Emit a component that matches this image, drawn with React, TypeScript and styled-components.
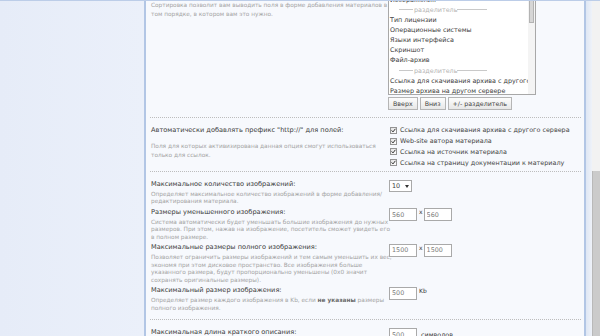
import styled, { createGlobalStyle } from "styled-components";

const GlobalStyle = createGlobalStyle`
    html, body {
        margin: 0;
        padding: 0;
    }
    body {
        font-family: "DejaVu Sans", Verdana, sans-serif;
        background: #e8edf8;
    }
`;

const sortOptions = [
    "Изображения",
    "---",
    "Тип лицензии",
    "Операционные системы",
    "Языки интерфейса",
    "Скриншот",
    "Файл-архив",
    "---",
    "Ссылка для скачивания архива с другого сервера",
    "Размер архива на другом сервере",
];

const prefixFields = [
    "Ссылка для скачивания архива с другого сервера",
    "Web-site автора материала",
    "Ссылка на источник материала",
    "Ссылка на страницу документации к материалу",
];

const Check = () => (
    <svg width="5" height="5" viewBox="0 0 5 5">
        <path d="M0.6 2.4 L2 3.9 L4.4 0.8" fill="none" stroke="#333" strokeWidth="1" />
    </svg>
);

const App = () => {
    return (
        <>
            <GlobalStyle />
            <Page>
                <Sidebar />
                <Main>
                    <Content>
                        <Row>
                            <Field>
                                <Label>
                                    <Title>Порядок полей в форме:</Title>
                                    <Desc $loose>
                                        Сортировка позволит вам выводить поля в форме добавления материалов в<br />
                                        том порядке, в котором вам это нужно.
                                    </Desc>
                                </Label>
                                <Control>
                                    <SortBox>
                                        <ListBox>
                                            <Options>
                                                {sortOptions.map((o, i) =>
                                                    o === "---" ? (
                                                        <DividerOption key={i}>разделитель</DividerOption>
                                                    ) : (
                                                        <Option key={i}>{o}</Option>
                                                    )
                                                )}
                                            </Options>
                                            <ListTrack>
                                                <ListThumb />
                                            </ListTrack>
                                        </ListBox>
                                        <ButtonBar>
                                            <Button>Вверх</Button>
                                            <Button>Вниз</Button>
                                            <Button>+/- разделитель</Button>
                                        </ButtonBar>
                                    </SortBox>
                                </Control>
                            </Field>
                        </Row>

                        <Row $tight>
                            <Field>
                                <Label>
                                    <Title>Автоматически добавлять префикс "http://" для полей:</Title>
                                    <Desc $loose>
                                        Поля для которых активизирована данная опция смогут использоваться<br />
                                        только для ссылок.
                                    </Desc>
                                </Label>
                                <Control>
                                    <CheckList>
                                        {prefixFields.map((f) => (
                                            <CheckItem key={f}>
                                                <Box>
                                                    <Check />
                                                </Box>
                                                {f}
                                            </CheckItem>
                                        ))}
                                    </CheckList>
                                </Control>
                            </Field>
                        </Row>

                        <Row>
                            <Field>
                                <Label>
                                    <Title>Максимальное количество изображений:</Title>
                                    <Desc>
                                        Определяет максимальное количество изображений в форме добавления/<br />
                                        редактирования материала.
                                    </Desc>
                                </Label>
                                <Control>
                                    <Select>10</Select>
                                </Control>
                            </Field>
                            <Field>
                                <Label>
                                    <Title>Размеры уменьшенного изображения:</Title>
                                    <Desc>
                                        Система автоматически будет уменьшать большие изображения до нужных<br />
                                        размеров. При этом, нажав на изображение, посетитель сможет увидеть его<br />
                                        в полном размере.
                                    </Desc>
                                </Label>
                                <Control>
                                    <Inline>
                                        <TextInput readOnly defaultValue="560" />
                                        <Unit>x</Unit>
                                        <TextInput readOnly defaultValue="560" />
                                    </Inline>
                                </Control>
                            </Field>
                            <Field>
                                <Label>
                                    <Title>Максимальные размеры полного изображения:</Title>
                                    <Desc>
                                        Позволяет ограничить размеры изображений и тем самым уменьшить их вес,<br />
                                        экономя при этом дисковое пространство. Все изображения больше<br />
                                        указанного размера, будут пропорционально уменьшены (0x0 значит<br />
                                        сохранять оригинальные размеры).
                                    </Desc>
                                </Label>
                                <Control>
                                    <Inline>
                                        <TextInput readOnly defaultValue="1500" />
                                        <Unit>x</Unit>
                                        <TextInput readOnly defaultValue="1500" />
                                    </Inline>
                                </Control>
                            </Field>
                            <Field>
                                <Label>
                                    <Title>Максимальный размер изображения:</Title>
                                    <Desc>
                                        Определяет размер каждого изображения в Kb, если <b>не указаны</b> размеры<br />
                                        полного изображения.
                                    </Desc>
                                </Label>
                                <Control>
                                    <Inline>
                                        <TextInput readOnly defaultValue="500" />
                                        <Unit>Kb</Unit>
                                    </Inline>
                                </Control>
                            </Field>
                        </Row>

                        <Row>
                            <Field>
                                <Label>
                                    <Title>Максимальная длина краткого описания:</Title>
                                </Label>
                                <Control>
                                    <Inline $center>
                                        <TextInput readOnly defaultValue="500" />
                                        <Suffix>символов</Suffix>
                                    </Inline>
                                </Control>
                            </Field>
                        </Row>
                    </Content>
                </Main>
                <Gutter>
                    <Strip />
                    <Track>
                        <Thumb />
                    </Track>
                </Gutter>
            </Page>
        </>
    );
};

const Page = styled.div`
    display: flex;
    width: 600px;
    height: 336px;
    border-top: 1px solid #bccde8;
    box-sizing: border-box;
    overflow: hidden;
`;
const Sidebar = styled.aside`
    width: 144px;
    flex-shrink: 0;
    background: linear-gradient(90deg, #e6ecf8, #ebf0fa);
`;
const Main = styled.main`
    width: 438px;
    flex-shrink: 0;
    border-left: 2px solid #b2c6e5;
    border-right: 2px solid #b2c6e5;
    background: #f7f9fd;
    overflow: hidden;
`;
const Content = styled.div`
    margin-top: -24px;
    padding: 0 3px 0 4px;
`;
const Row = styled.section<{ $tight?: boolean }>`
    display: flex;
    flex-direction: column;
    gap: 1px;
    padding: 6.5px 0 ${(p) => (p.$tight ? "3px" : "7px")};
    border-bottom: 1px dotted #bdbdbd;
`;
const Field = styled.div`
    display: grid;
    grid-template-columns: 239px 1fr;
    align-items: start;
`;
const Label = styled.div`
    padding: 0 2px 0 1px;
`;
const Title = styled.div`
    font-size: 6.6px;
    line-height: 10px;
    color: #3a3a3a;
    white-space: nowrap;
`;
const Desc = styled.p<{ $loose?: boolean }>`
    margin: ${(p) => (p.$loose ? "7.25px" : "2px")} 0 0;
    font-size: 5.8px;
    line-height: ${(p) => (p.$loose ? "9.5px" : "7.5px")};
    color: #a3a3a3;
    white-space: nowrap;

    b {
        color: #6a6a6a;
        font-weight: bold;
    }
`;
const Control = styled.div`
    padding-top: 1.5px;
    font-size: 6.4px;
    color: #3a3a3a;
`;
const SortBox = styled.div`
    margin: 8.5px 0 0 -1px;
`;
const ListBox = styled.div`
    display: flex;
    width: 148px;
    height: 101.5px;
    box-sizing: border-box;
    border: 1px solid #a8a8a8;
    background: #fff;
    overflow: hidden;
`;
const Options = styled.ul`
    flex: 1;
    min-width: 0;
    margin: 0;
    padding: 0 0 0 1px;
    list-style: none;
    overflow: hidden;
`;
const Option = styled.li`
    line-height: 10.15px;
    white-space: nowrap;
    color: #3c3c3c;
`;
const DividerOption = styled.li`
    display: flex;
    align-items: center;
    line-height: 10.15px;
    padding-left: 9px;
    color: #b4b4b4;

    &::before,
    &::after {
        content: "";
        height: 1px;
        background: #c9c9c9;
    }
    &::before {
        width: 14px;
        margin-right: 1px;
    }
    &::after {
        width: 30px;
    }
`;
const ListTrack = styled.div`
    width: 7px;
    flex-shrink: 0;
    background: #f4f4f4;
    padding: 0 1px;
    box-sizing: border-box;
`;
const ListThumb = styled.div`
    height: 28px;
    background: #d6d6d6;
    border: 1px solid #b3b3b3;
    border-top: none;
    box-sizing: border-box;
`;
const ButtonBar = styled.div`
    display: flex;
    gap: 2px;
    margin-top: 2px;
`;
const Button = styled.button`
    height: 13px;
    padding: 0 4px;
    border: 1px solid #b5b5b5;
    border-radius: 0;
    background: linear-gradient(#fdfdfd, #e7e7e7);
    font-family: "DejaVu Sans", Verdana, sans-serif;
    font-size: 6.3px;
    line-height: 11px;
    color: #444;
`;
const CheckList = styled.ul`
    margin: -1px 0 0;
    padding: 0 0 0 1px;
    list-style: none;
`;
const CheckItem = styled.li`
    display: flex;
    align-items: center;
    gap: 3px;
    height: 10.8px;
    white-space: nowrap;
    color: #444;
`;
const Box = styled.span`
    display: inline-flex;
    align-items: center;
    justify-content: center;
    width: 7px;
    height: 7px;
    box-sizing: border-box;
    border: 1px solid #949494;
    background: linear-gradient(135deg, #e2e2e2, #fdfdfd);
`;
const Select = styled.div`
    display: inline-flex;
    align-items: center;
    gap: 5px;
    width: 23px;
    height: 12px;
    box-sizing: border-box;
    padding-left: 2px;
    border: 1px solid #a9a9a9;
    background: #fff;

    &::after {
        content: "";
        border-left: 2px solid transparent;
        border-right: 2px solid transparent;
        border-top: 3px solid #333;
    }
`;
const Inline = styled.div<{ $center?: boolean }>`
    display: flex;
    align-items: ${(p) => (p.$center ? "center" : "flex-start")};
`;
const TextInput = styled.input`
    width: 28px;
    height: 13px;
    box-sizing: border-box;
    margin: 0;
    padding: 0 0 0 2px;
    border: 1px solid #a9a9a9;
    background: #fff;
    font-family: "DejaVu Sans", Verdana, sans-serif;
    font-size: 6.4px;
    color: #7a7a7a;
    outline: none;
`;
const Unit = styled.span`
    margin: 0 1px 0 2px;
    font-size: 6px;
    line-height: 7px;
    color: #333;
`;
const Suffix = styled.span`
    margin-left: 4px;
    font-size: 6.4px;
    color: #333;
`;
const Gutter = styled.div`
    display: flex;
    flex: 1;
`;
const Strip = styled.div`
    width: 6px;
    background: linear-gradient(90deg, #dfe7f4, #eef2f9);
`;
const Track = styled.div`
    flex: 1;
    background: #f2f2f2;
`;
const Thumb = styled.div`
    margin-top: 170px;
    height: 180px;
    background: #cbcbcb;
    border-left: 1px solid #b9b9b9;
`;

export default App;
